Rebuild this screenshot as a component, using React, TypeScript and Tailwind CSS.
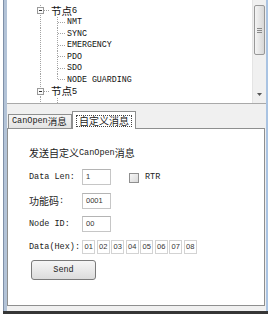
import React from 'react';

const mono = "font-['Liberation_Mono',monospace]";
const cjk = "font-['Noto_Sans_CJK_SC',sans-serif]";
const sans = "font-['Liberation_Sans',Arial,sans-serif]";

const children = ['NMT', 'SYNC', 'EMERGENCY', 'PDO', 'SDO', 'NODE GUARDING'];

function NodeGutter() {
  // top-level connector: vertical dotted line, +/- box, short dash
  return (
    <svg width="16" height="11.5" viewBox="0 0 16 11.5" className="shrink-0">
      <line x1="5.5" y1="0" x2="5.5" y2="11.5" stroke="#a3a3a3" strokeDasharray="1 1" />
      <line x1="9" y1="5.5" x2="15" y2="5.5" stroke="#a3a3a3" strokeDasharray="1 1" />
      <rect x="2.5" y="2.5" width="6" height="6" fill="#fbfbfb" stroke="#9a9a9a" />
      <line x1="4" y1="5.5" x2="7" y2="5.5" stroke="#333" />
    </svg>
  );
}

function ChildGutter({ last }: { last: boolean }) {
  return (
    <svg width="30" height="11.5" viewBox="0 0 30 11.5" className="shrink-0">
      <line x1="5.5" y1="0" x2="5.5" y2="11.5" stroke="#a3a3a3" strokeDasharray="1 1" />
      <line x1="22.5" y1="0" x2="22.5" y2={last ? 5.5 : 11.5} stroke="#a3a3a3" strokeDasharray="1 1" />
      <line x1="23" y1="5.5" x2="30" y2="5.5" stroke="#a3a3a3" strokeDasharray="1 1" />
    </svg>
  );
}

function NodeLabel({ n }: { n: string }) {
  return (
    <div className="flex items-center ml-[0px] text-[#111]">
      <span className={`${cjk} text-[10.5px] leading-none`}>节点</span>
      <span className={`${sans} text-[9px] leading-none`}>{n}</span>
    </div>
  );
}

function Tree() {
  return (
    <div className="flex-1 bg-white overflow-hidden pt-[5px] pl-[28px]">
      <div className="flex items-center h-[11.5px]">
        <NodeGutter />
        <NodeLabel n="6" />
      </div>
      {children.map((c, i) => (
        <div key={c} className="flex items-center h-[11.5px]">
          <ChildGutter last={i === children.length - 1} />
          <span className={`${mono} text-[8.3px] leading-none pl-[2px] text-[#111]`}>{c}</span>
        </div>
      ))}
      <div className="flex items-center h-[11.5px]">
        <NodeGutter />
        <NodeLabel n="5" />
      </div>
      <svg width="30" height="6" viewBox="0 0 30 6" className="block">
        <line x1="5.5" y1="0" x2="5.5" y2="6" stroke="#a3a3a3" strokeDasharray="1 1" />
        <line x1="22.5" y1="1" x2="22.5" y2="6" stroke="#a3a3a3" strokeDasharray="1 1" />
      </svg>
    </div>
  );
}

function ScrollBar() {
  return (
    <div className="w-[14px] flex flex-col bg-[#f0f0f0] border-l border-[#e4e4e4]">
      <div className="mt-[5px] mx-[1px] h-[50px] rounded-[2px] border border-[#989898] bg-gradient-to-r from-[#f4f4f4] to-[#d8d8d8] flex flex-col items-center justify-center gap-[1px]">
        <div className="w-[5px] h-px bg-[#8a8a8a]" />
        <div className="w-[5px] h-px bg-[#8a8a8a]" />
        <div className="w-[5px] h-px bg-[#8a8a8a]" />
      </div>
      <div className="flex-1" />
      <div className="h-[17px] flex items-center justify-center">
        <svg width="5" height="3" viewBox="0 0 5 3">
          <path d="M0 0 L5 0 L2.5 3 Z" fill="#555" />
        </svg>
      </div>
    </div>
  );
}

function Input({ value }: { value: string }) {
  return (
    <div className={`w-[29px] h-[16px] bg-white border border-[#c6c6c6] border-t-[#b4b4b4] flex items-center pl-[3px] ${sans} text-[7.5px] text-[#333]`}>
      {value}
    </div>
  );
}

function Label({ children }: { children: React.ReactNode }) {
  return <div className="w-[53px] flex items-center text-[#222]">{children}</div>;
}

const hex = ['01', '02', '03', '04', '05', '06', '07', '08'];

export default function App() {
  return (
    <div className="w-[276px] h-[314px] bg-white flex overflow-hidden">
      <div className="w-[3px]" />
      <div className="w-[265px] flex flex-col">
        <div className="flex flex-1">
          <div className="w-[4px] bg-[#b3c3d7] border-l border-[#7f90a8]" />
          <div className="w-[259px] bg-[#f0f0f0] flex flex-col">
            <div className="h-[104px] flex border-b border-[#a9a9a9]">
              <Tree />
              <ScrollBar />
            </div>

            <div className="h-[24px] flex items-end pl-[1px]">
              <div className="h-[14px] w-[64px] border border-b-0 border-[#8e8f8f] bg-gradient-to-b from-[#f5f5f5] to-[#e3e3e3] flex items-center pl-[3px]">
                <span className={`${mono} text-[8.5px] leading-none text-[#222]`}>CanOpen</span>
                <span className={`${cjk} text-[9.5px] leading-none text-[#222]`}>消息</span>
              </div>
              <div className="relative z-10 -mb-px h-[18px] w-[64px] border border-b-0 border-[#8e8f8f] bg-white flex items-center pl-[3px]">
                <div className={`border border-dotted border-[#444] px-[2px] h-[12px] flex items-center ${cjk} text-[10px] leading-none text-[#222]`}>
                  自定义消息
                </div>
              </div>
            </div>

            <div className="flex-1 mr-[1px] mb-[5px] bg-white border border-[#8e8f8f] pl-[21px] pt-[18px] flex flex-col">
              <div className="h-[12px] flex items-center text-[#222]">
                <span className={`${cjk} text-[10px] leading-none`}>发送自定义</span>
                <span className={`${mono} text-[8.5px] leading-none`}>CanOpen</span>
                <span className={`${cjk} text-[10px] leading-none`}>消息</span>
              </div>

              <div className="mt-[10px] h-[16px] flex">
                <Label>
                  <span className={`${mono} text-[8.5px] leading-none`}>Data Len:</span>
                </Label>
                <Input value="1" />
                <div className="ml-[18px] w-[10px] h-[10px] mt-[4px] border border-[#8f8f8f] bg-gradient-to-br from-[#f6f6f6] to-[#dadada]" />
                <span className={`ml-[6px] flex items-center ${mono} text-[8.5px] leading-none text-[#222]`}>RTR</span>
              </div>

              <div className="mt-[8px] h-[16px] flex">
                <Label>
                  <span className={`${cjk} text-[10px] leading-none`}>功能码</span>
                  <span className={`${mono} text-[8.5px] leading-none`}>:</span>
                </Label>
                <Input value="0001" />
              </div>

              <div className="mt-[7px] h-[16px] flex">
                <Label>
                  <span className={`${mono} text-[8.5px] leading-none`}>Node ID:</span>
                </Label>
                <Input value="00" />
              </div>

              <div className="mt-[8px] h-[14px] flex">
                <Label>
                  <span className={`${mono} text-[8.5px] leading-none`}>Data(Hex):</span>
                </Label>
                <div className="flex gap-[1.5px]">
                  {hex.map((h) => (
                    <div
                      key={h}
                      className={`w-[13px] h-[14px] bg-white border border-[#d3d3d3] flex items-center pl-[1.5px] ${sans} text-[7.5px] text-[#333]`}
                    >
                      {h}
                    </div>
                  ))}
                </div>
              </div>

              <div className="mt-[6px] ml-[2px] w-[65px] h-[20px] rounded-[3px] border border-[#7a7a7a] bg-gradient-to-b from-[#f6f6f6] to-[#dcdcdc] flex items-center justify-center">
                <span className={`${mono} text-[8.5px] leading-none text-[#222]`}>Send</span>
              </div>
            </div>
          </div>
          <div className="w-[2px] bg-[#a9c3e2]" />
        </div>
        <div className="h-[3px] bg-[#363636]" />
      </div>
    </div>
  );
}
